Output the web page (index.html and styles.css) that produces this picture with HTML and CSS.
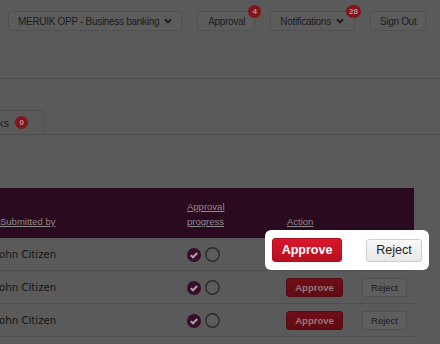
FILE: index.html
```html
<!DOCTYPE html>
<html lang="en">
<head>
    <meta charset="UTF-8">
    <meta name="viewport" content="width=device-width, initial-scale=1.0">
    <title>Approvals</title>
    <link rel="stylesheet" href="styles.css">
</head>
<body>
    <header class="topbar">
        <button class="btn">MERUIK OPP - Business banking
            <svg class="chevron" width="8" height="6" viewBox="0 0 8 6"><path d="M1 1.2 L4 4.4 L7 1.2" /></svg>
        </button>
        <button class="btn">Approval<span class="badge">4</span></button>
        <button class="btn">Notifications
            <svg class="chevron" width="8" height="6" viewBox="0 0 8 6"><path d="M1 1.2 L4 4.4 L7 1.2" /></svg>
            <span class="badge">28</span>
        </button>
        <button class="btn">Sign Out</button>
    </header>

    <main>
        <nav class="tabs">
            <a class="tab">Tasks <span class="count">0</span></a>
        </nav>

        <div class="table">
            <div class="row head">
                <div class="cell"><a>Submitted by</a></div>
                <div class="cell"><a>Approval<br>progress</a></div>
                <div class="cell"><a>Action</a></div>
                <div class="cell"></div>
            </div>

            <div class="row focused">
                <div class="cell name">John Citizen</div>
                <div class="cell progress">
                    <svg width="14" height="14" viewBox="0 0 14 14"><circle class="done" cx="7" cy="7" r="7" /><path class="tick" d="M3.8 7.2 L6 9.3 L10.2 5" /></svg>
                    <svg width="15" height="15" viewBox="0 0 15 15"><circle class="todo" cx="7.5" cy="7.5" r="6.7" /></svg>
                </div>
                <div class="cell"><button class="approve">Approve</button></div>
                <div class="cell"><button class="reject">Reject</button></div>
            </div>

            <div class="row">
                <div class="cell name">John Citizen</div>
                <div class="cell progress">
                    <svg width="14" height="14" viewBox="0 0 14 14"><circle class="done" cx="7" cy="7" r="7" /><path class="tick" d="M3.8 7.2 L6 9.3 L10.2 5" /></svg>
                    <svg width="15" height="15" viewBox="0 0 15 15"><circle class="todo" cx="7.5" cy="7.5" r="6.7" /></svg>
                </div>
                <div class="cell"><button class="approve">Approve</button></div>
                <div class="cell"><button class="reject">Reject</button></div>
            </div>

            <div class="row">
                <div class="cell name">John Citizen</div>
                <div class="cell progress">
                    <svg width="14" height="14" viewBox="0 0 14 14"><circle class="done" cx="7" cy="7" r="7" /><path class="tick" d="M3.8 7.2 L6 9.3 L10.2 5" /></svg>
                    <svg width="15" height="15" viewBox="0 0 15 15"><circle class="todo" cx="7.5" cy="7.5" r="6.7" /></svg>
                </div>
                <div class="cell"><button class="approve">Approve</button></div>
                <div class="cell"><button class="reject">Reject</button></div>
            </div>

            <div class="row"></div>
        </div>
    </main>

    <!-- highlighted actions shown over the dimmed page -->
    <div class="spotlight">
        <button class="approve big">Approve</button>
        <button class="reject big">Reject</button>
    </div>
</body>
</html>
```

FILE: styles.css
```css
:root {
    --page: #5a5a5a;
    --line: #4e4e4e;
    --ink: #1c1c1c;
    --badge: #85131a;
    --head: #2a0a1e;
}

* {
    margin: 0;
    padding: 0;
    box-sizing: border-box;
}

body {
    font-family: 'Liberation Sans', Arial, sans-serif;
    background-color: var(--page);
    color: var(--ink);
    width: 440px;
    height: 344px;
    overflow: hidden;
    position: relative;
}

.topbar {
    display: flex;
    align-items: flex-start;
    gap: 15px;
    padding: 11px 8px 0;
    height: 79px;
    border-bottom: 1px solid var(--line);
}

.btn {
    position: relative;
    display: flex;
    align-items: center;
    gap: 5px;
    height: 20px;
    padding: 0 9px 0 9px;
    font-family: inherit;
    font-size: 10px;
    letter-spacing: -0.3px;
    color: var(--ink);
    background-color: #5c5c5c;
    border: 1px solid #515151;
    border-radius: 3px;
}

.btn:nth-child(2) {
    padding: 0 9px 0 10px;
}

.btn:nth-child(3) {
    padding: 0 10px 0 9px;
}

.chevron path {
    fill: none;
    stroke: var(--ink);
    stroke-width: 2;
}

.badge {
    position: absolute;
    top: -7px;
    right: -7px;
    min-width: 13px;
    height: 13px;
    padding: 0 3px;
    border-radius: 7px;
    background-color: var(--badge);
    color: #b89496;
    font-size: 8px;
    font-weight: bold;
    letter-spacing: 0;
    line-height: 13px;
    text-align: center;
}

.tabs {
    margin-top: 31px;
    border-bottom: 1px solid var(--line);
    display: flex;
}

.tab {
    display: flex;
    align-items: center;
    gap: 6px;
    height: 24px;
    margin-left: -32px;
    padding: 0 15px 0 12px;
    font-size: 11px;
    color: var(--ink);
    border: 1px solid #515151;
    border-bottom: none;
    border-radius: 0 3px 0 0;
}

.count {
    width: 13px;
    height: 13px;
    border-radius: 50%;
    background-color: var(--badge);
    color: #b89496;
    font-size: 8px;
    font-weight: bold;
    line-height: 13px;
    text-align: center;
}

.table {
    margin: 53px 0 0 -20px;
    width: 434px;
}

.row {
    display: grid;
    grid-template-columns: 207px 99px 76px 52px;
    align-items: center;
    height: 33px;
    border-bottom: 1px solid #4f4f4f;
    background-color: #5a5a5a;
}

.row.head {
    height: 50px;
    align-items: end;
    padding-bottom: 9px;
    background-color: var(--head);
    border-bottom: none;
}

.head a {
    display: block;
    font-size: 9.5px;
    line-height: 15px;
    color: #908a8d;
    text-decoration: underline;
}

.head .cell:first-child {
    padding-left: 20px;
}

.head .cell:nth-child(3) {
    padding-left: 1px;
}

.name {
    padding-left: 16px;
    font-family: 'DejaVu Sans', Verdana, sans-serif;
    font-size: 10.2px;
    color: #151515;
}

.progress {
    display: flex;
    align-items: center;
    gap: 4px;
    padding-top: 1px;
}

.done {
    fill: #380d29;
}

.tick {
    fill: none;
    stroke: #aba2a7;
    stroke-width: 2;
}

.todo {
    fill: #5c5c5c;
    stroke: #2b2b2b;
    stroke-width: 1.4;
}

.approve {
    width: 57px;
    height: 19px;
    font-family: inherit;
    font-size: 9.5px;
    font-weight: bold;
    color: #94777a;
    background: linear-gradient(#700e17, #600b13);
    border: 1px solid #580a11;
    border-radius: 3px;
}

.reject {
    width: 45px;
    height: 19px;
    font-family: inherit;
    font-size: 9.5px;
    color: var(--ink);
    background-color: #5e5e5e;
    border: 1px solid #505050;
    border-radius: 3px;
}

/* the focused row's buttons are shown in the spotlight instead */
.focused .approve,
.focused .reject {
    visibility: hidden;
}

.spotlight {
    position: absolute;
    left: 265px;
    top: 230px;
    width: 164px;
    height: 40px;
    padding: 0 7px;
    display: flex;
    align-items: center;
    justify-content: space-between;
    background-color: #fff;
    border-radius: 6px;
}

.approve.big {
    width: 70px;
    height: 24px;
    font-size: 12.5px;
    color: #fff;
    background: linear-gradient(#d8172b, #b70f20);
    border: 1px solid #b00e1e;
}

.reject.big {
    width: 56px;
    height: 23px;
    font-size: 12.5px;
    color: #222;
    background: linear-gradient(#f8f8f8, #e8e8e8);
    border: 1px solid #cfcfcf;
}
```
